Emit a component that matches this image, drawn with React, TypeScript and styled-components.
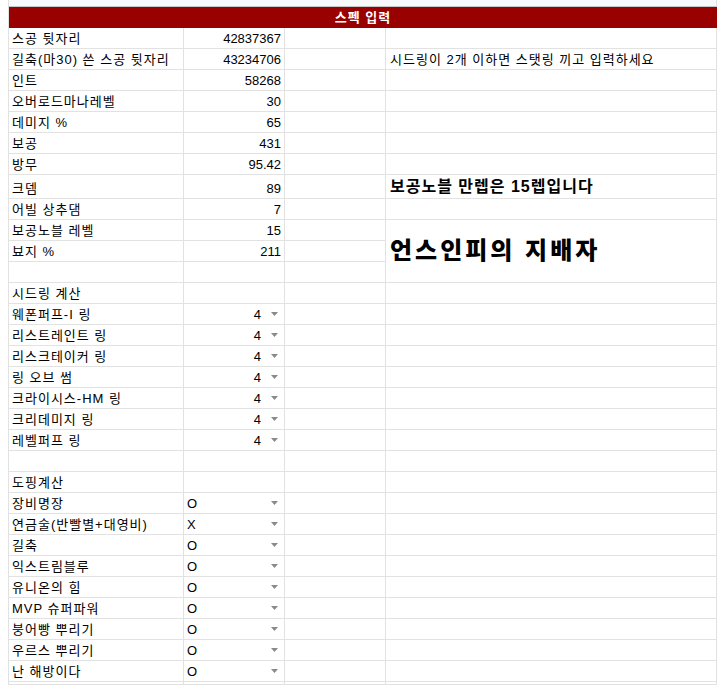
import React from 'react';
import styled, { createGlobalStyle } from 'styled-components';

const GlobalStyle = createGlobalStyle`
  html, body { margin: 0; padding: 0; background: #ffffff; }
  body {
    font-family: "Liberation Sans", Arial, "Noto Sans CJK KR", sans-serif;
    font-size: 13px;
    color: #000000;
  }
`;

const GRID = '#e2e2e2';

const Page = styled.div`
  padding-left: 8px;
  width: 709px;
`;

const TopStrip = styled.div`
  box-sizing: border-box;
  height: 7px;
  width: 709px;
  background: #f8f9fa;
  border-left: 1px solid ${GRID};
  border-right: 1px solid ${GRID};
  border-bottom: 1px solid #c4c7c5;
`;

const Grid = styled.div`
  display: grid;
  width: 708px;
  grid-template-columns: 175px 101px 101px 331px;
  grid-template-rows: 21px repeat(7, 21px) 24px repeat(23, 21px);
  border-left: 1px solid ${GRID};
`;

const Header = styled.div`
  grid-column: 1 / -1;
  background: #990000;
  color: #ffffff;
  font-weight: 700;
  letter-spacing: 1px;
  display: flex;
  align-items: flex-end;
  justify-content: center;
  padding-bottom: 3px;
  line-height: 15px;
  box-sizing: border-box;
`;

type Align = 'left' | 'right';

const Cell = styled.div<{ $align?: Align }>`
  box-sizing: border-box;
  border-right: 1px solid ${GRID};
  border-bottom: 1px solid ${GRID};
  padding: 0 3px 2px 3px;
  display: flex;
  align-items: flex-end;
  justify-content: ${(p) => (p.$align === 'right' ? 'flex-end' : 'flex-start')};
  letter-spacing: ${(p) => (p.$align === 'right' ? '0' : '1px')};
  line-height: 15px;
  white-space: nowrap;
  overflow: visible;
  min-width: 0;
`;

const NoteCell = styled(Cell)`
  padding-left: 4px;
`;

const BoldNote = styled(Cell)`
  font-size: 16px;
  font-weight: 700;
  letter-spacing: 1px;
  padding-left: 4px;
  padding-bottom: 2px;
  line-height: 18px;
`;

const TitleCell = styled(Cell)<{ $span: number }>`
  grid-row: span ${(p) => p.$span};
  align-items: center;
  padding: 0 0 0 4px;
  font-size: 24px;
  font-weight: 900;
  letter-spacing: 3px;
  line-height: 28px;
`;

const DropCell = styled(Cell)<{ $pos: 'left' | 'right' }>`
  padding-right: 6px;
  letter-spacing: 0;
  justify-content: ${(p) => (p.$pos === 'right' ? 'flex-end' : 'space-between')};
`;

const DropValue = styled.span`
  display: block;
`;

const Arrow = styled.svg`
  display: block;
  align-self: center;
  margin-top: 1px;
  margin-left: 10px;
  flex: none;
`;

const DropArrow = () => (
  <Arrow width="7" height="4" viewBox="0 0 7 4">
    <polygon points="0,0 7,0 3.5,4" fill="#8a8a8a" />
  </Arrow>
);

type Row = {
  a: string;
  b?: string;
  d?: string;
  kind?: 'num' | 'ring' | 'dope';
};

const specRows: Row[] = [
  { a: '스공 뒷자리', b: '42837367', kind: 'num' },
  { a: '길축(마30) 쓴 스공 뒷자리', b: '43234706', kind: 'num', d: '시드링이 2개 이하면 스탯링 끼고 입력하세요' },
  { a: '인트', b: '58268', kind: 'num' },
  { a: '오버로드마나레벨', b: '30', kind: 'num' },
  { a: '데미지 %', b: '65', kind: 'num' },
  { a: '보공', b: '431', kind: 'num' },
  { a: '방무', b: '95.42', kind: 'num' },
];

const ringRows: Row[] = [
  { a: '웨폰퍼프-I 링', b: '4', kind: 'ring' },
  { a: '리스트레인트 링', b: '4', kind: 'ring' },
  { a: '리스크테이커 링', b: '4', kind: 'ring' },
  { a: '링 오브 썸', b: '4', kind: 'ring' },
  { a: '크라이시스-HM 링', b: '4', kind: 'ring' },
  { a: '크리데미지 링', b: '4', kind: 'ring' },
  { a: '레벨퍼프 링', b: '4', kind: 'ring' },
];

const dopeRows: Row[] = [
  { a: '장비명장', b: 'O', kind: 'dope' },
  { a: '연금술(반빨별+대영비)', b: 'X', kind: 'dope' },
  { a: '길축', b: 'O', kind: 'dope' },
  { a: '익스트림블루', b: 'O', kind: 'dope' },
  { a: '유니온의 힘', b: 'O', kind: 'dope' },
  { a: 'MVP 슈퍼파워', b: 'O', kind: 'dope' },
  { a: '붕어빵 뿌리기', b: 'O', kind: 'dope' },
  { a: '우르스 뿌리기', b: 'O', kind: 'dope' },
  { a: '난 해방이다', b: 'O', kind: 'dope' },
];

const BCell = ({ row }: { row: Row }) => {
  if (row.kind === 'ring') {
    return (
      <DropCell $pos="right">
        <DropValue>{row.b}</DropValue>
        <DropArrow />
      </DropCell>
    );
  }
  if (row.kind === 'dope') {
    return (
      <DropCell $pos="left">
        <DropValue>{row.b}</DropValue>
        <DropArrow />
      </DropCell>
    );
  }
  return <Cell $align="right">{row.b}</Cell>;
};

const StdRow = ({ row, withD = true }: { row: Row; withD?: boolean }) => (
  <>
    <Cell>{row.a}</Cell>
    <BCell row={row} />
    <Cell />
    {withD && (row.d ? <NoteCell>{row.d}</NoteCell> : <Cell />)}
  </>
);

const EmptyRow = ({ withD = true }: { withD?: boolean }) => (
  <>
    <Cell />
    <Cell />
    <Cell />
    {withD && <Cell />}
  </>
);

const LabelRow = ({ label }: { label: string }) => (
  <>
    <Cell>{label}</Cell>
    <Cell />
    <Cell />
    <Cell />
  </>
);

export default function App() {
  return (
    <>
      <GlobalStyle />
      <Page>
        <TopStrip />
        <Grid>
          <Header>스펙 입력</Header>
          {specRows.map((r) => (
            <StdRow key={r.a} row={r} />
          ))}
          <Cell>크뎀</Cell>
          <Cell $align="right">89</Cell>
          <Cell />
          <BoldNote>보공노블 만렙은 15렙입니다</BoldNote>

          <StdRow row={{ a: '어빌 상추댐', b: '7', kind: 'num' }} />

          <Cell>보공노블 레벨</Cell>
          <Cell $align="right">15</Cell>
          <Cell />
          <TitleCell $span={3}>언스인피의 지배자</TitleCell>

          <StdRow row={{ a: '뵤지 %', b: '211', kind: 'num' }} withD={false} />
          <EmptyRow withD={false} />

          <LabelRow label="시드링 계산" />
          {ringRows.map((r) => (
            <StdRow key={r.a} row={r} />
          ))}
          <EmptyRow />

          <LabelRow label="도핑계산" />
          {dopeRows.map((r) => (
            <StdRow key={r.a} row={r} />
          ))}
          <EmptyRow />
        </Grid>
      </Page>
    </>
  );
}
